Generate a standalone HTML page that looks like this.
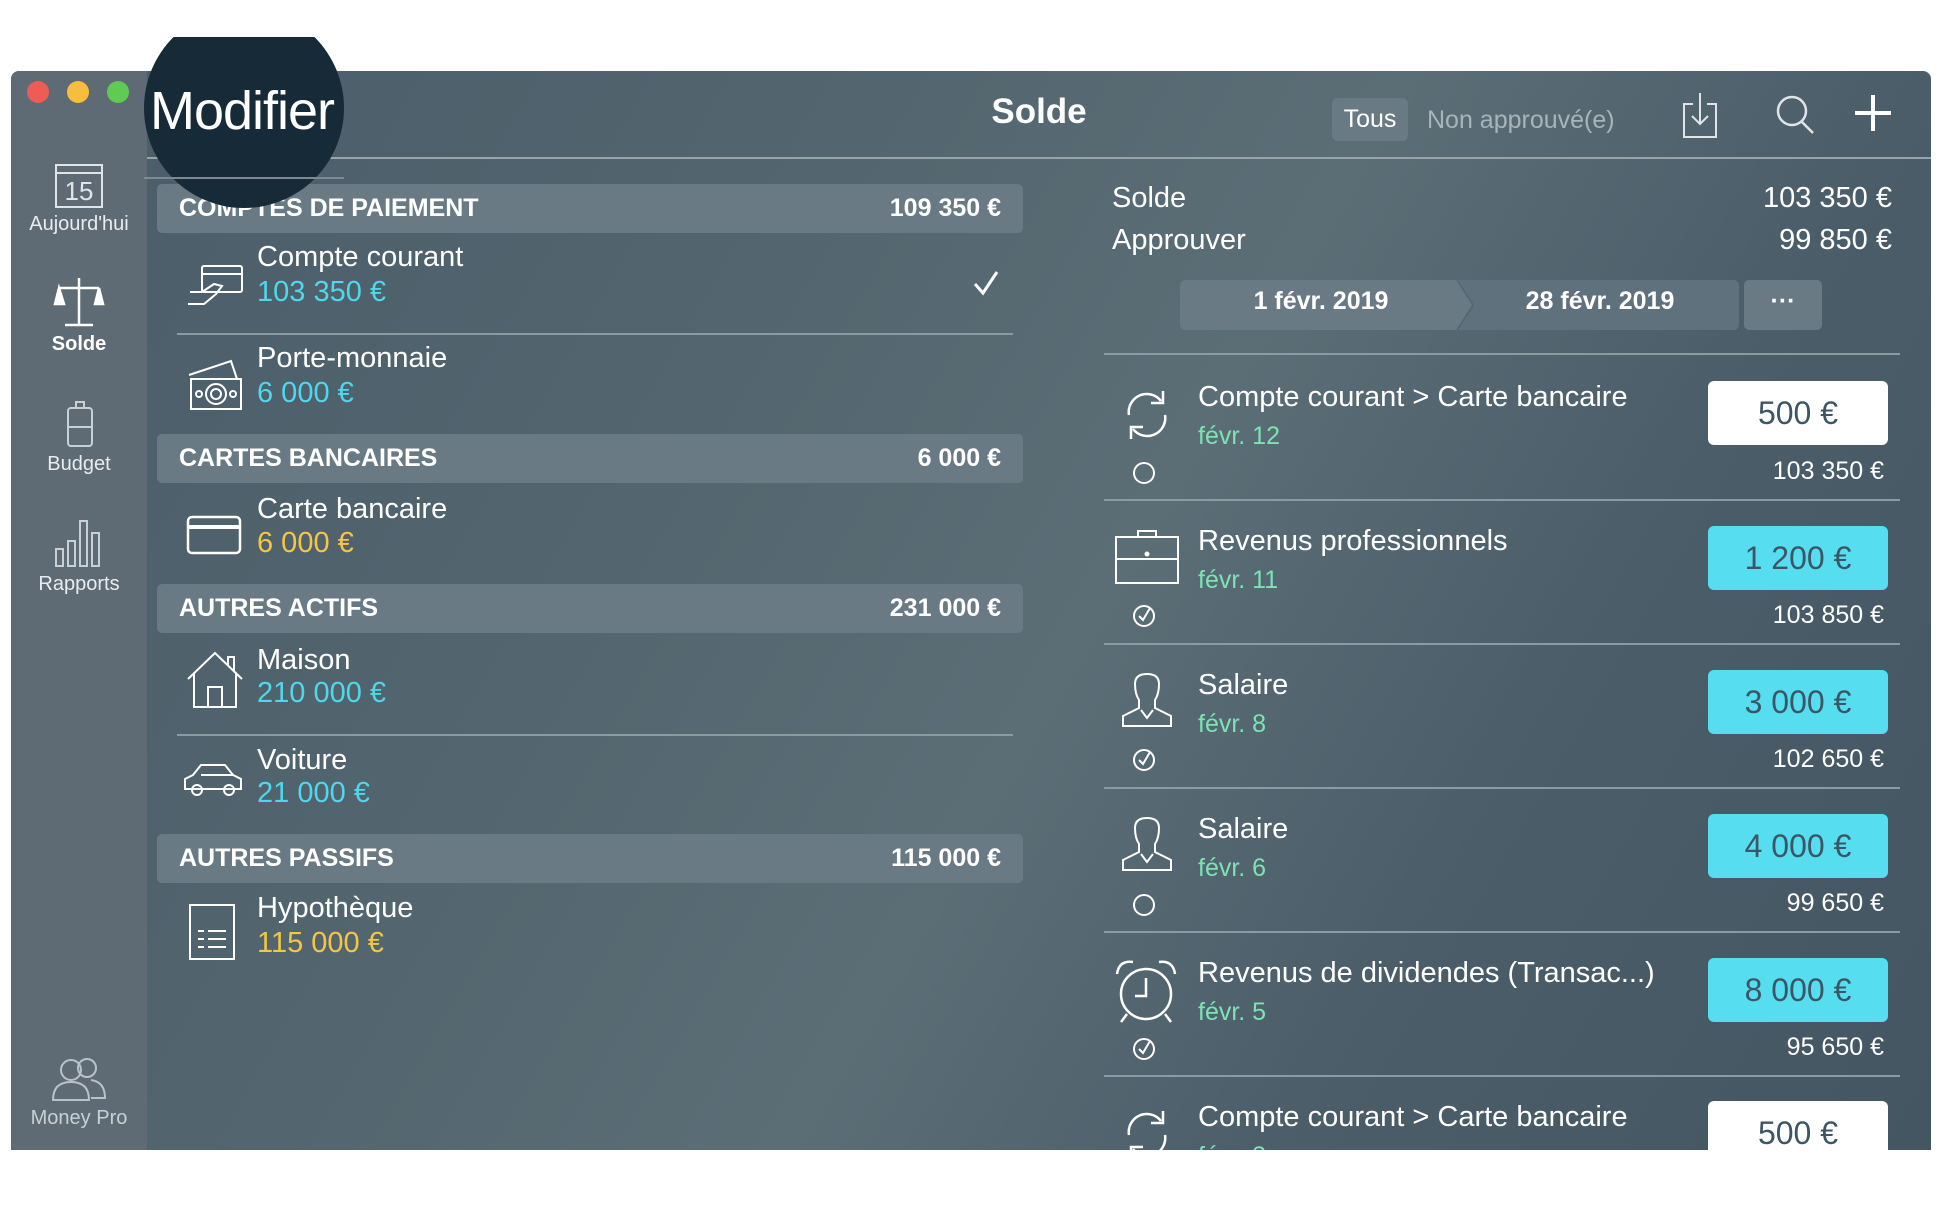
<!DOCTYPE html>
<html><head><meta charset="utf-8"><style>
*{margin:0;padding:0;box-sizing:border-box}
body{width:1940px;height:1220px;background:#fff;position:relative;overflow:hidden;font-family:"Liberation Sans",sans-serif;color:#fff}
.win{position:absolute;left:11px;top:71px;width:1920px;height:1079px;border-radius:8px 8px 0 0;overflow:hidden;
background:linear-gradient(120deg,#4a5c69 0%,#53666f 35%,#5b6e76 55%,#4b5d69 75%,#445662 100%)}
.side{position:absolute;left:0;top:0;width:136px;height:100%;background:#5e6b74}
.a{position:absolute}
.tl{position:absolute;top:10px;width:22px;height:22px;border-radius:50%}
.slab{position:absolute;width:136px;text-align:center;font-size:20px;color:#e8ecef}
.hdr{position:absolute;left:146px;width:866px;height:49px;background:#6a7a84;border-radius:5px;font-size:25px;font-weight:bold;line-height:49px;padding:0 22px 0 22px}
.hdr span{float:right}
.nm{position:absolute;left:246px;font-size:29px}
.am{position:absolute;left:246px;font-size:29px}
.cy{color:#4fd7ec}.ye{color:#f6c640}
.sep{position:absolute;height:2px;background:#8e9aa2}
.tt{position:absolute;left:1187px;font-size:29px}
.td{position:absolute;left:1187px;font-size:25px;color:#7de3b3}
.box{position:absolute;left:1697px;width:180px;height:64px;border-radius:6px;font-size:32px;color:#3d5666;text-align:center;line-height:64px;background:#56ddf0}
.box.w{background:#fff}
.bal{position:absolute;right:47px;font-size:25px;text-align:right}
svg{position:absolute;overflow:visible}
</style></head><body>
<div class="win">
 <div class="side"></div>
 <div class="tl" style="left:16px;background:#ee5c55"></div>
 <div class="tl" style="left:56px;background:#f6be3c"></div>
 <div class="tl" style="left:96px;background:#5fcb52"></div>
 <svg style="left:44px;top:93px" width="48" height="46" fill="none" stroke="#dfe4e8" stroke-width="2"><rect x="1" y="1" width="46" height="42"/><line x1="1" y1="9" x2="47" y2="9"/><text x="24" y="36" fill="#dfe4e8" stroke="none" font-size="26" text-anchor="middle" font-family="Liberation Sans">15</text></svg>
 <div class="slab" style="top:142px">Aujourd'hui</div>
 <svg style="left:44px;top:205px" width="48" height="52" fill="none" stroke="#fff" stroke-width="2.5"><line x1="24" y1="2" x2="24" y2="48"/><line x1="10" y1="49" x2="38" y2="49"/><line x1="4" y1="12" x2="44" y2="12"/><path d="M4 12 L0 28 H9 Z M44 12 L40 28 H48 Z" fill="#fff"/></svg>
 <div class="slab" style="top:262px;font-weight:bold;color:#fff">Solde</div>
 <svg style="left:56px;top:330px" width="26" height="46" fill="none" stroke="#c9d0d5" stroke-width="2"><rect x="9" y="1" width="8" height="6"/><rect x="1" y="7" width="24" height="38" rx="3"/><line x1="1" y1="26" x2="25" y2="26"/></svg>
 <div class="slab" style="top:382px">Budget</div>
 <svg style="left:44px;top:448px" width="48" height="48" fill="none" stroke="#c9d0d5" stroke-width="2"><rect x="1" y="30" width="7" height="17"/><rect x="13" y="22" width="7" height="25"/><rect x="25" y="2" width="7" height="45"/><rect x="37" y="14" width="7" height="33"/></svg>
 <div class="slab" style="top:502px">Rapports</div>
 <svg style="left:40px;top:985px" width="56" height="46" fill="none" stroke="#b9c2c8" stroke-width="2"><circle cx="20" cy="14" r="10"/><path d="M2 44 Q2 26 20 26 Q38 26 38 44 Z"/><circle cx="36" cy="12" r="9"/><path d="M40 24 Q54 26 54 42 H40"/></svg>
 <div class="slab" style="top:1036px;color:#c9d0d5">Money Pro</div>
 <div class="sep" style="left:136px;top:86px;width:1784px;height:2px;background:#98a3aa"></div>
 <div class="a" style="left:0;width:2056px;text-align:center;top:21px;font-size:35px;font-weight:bold">Solde</div>
 <div class="a" style="left:1321px;top:27px;width:76px;height:43px;border-radius:6px;background:#6a7a84;font-size:25px;text-align:center;line-height:43px">Tous</div>
 <div class="a" style="left:1416px;top:35px;font-size:25px;color:#a9b4ba">Non approuvé(e)</div>
 <svg style="left:1672px;top:21px" width="34" height="46" fill="none" stroke="#dfe4e8" stroke-width="2"><path d="M10 12 H1 V45 H33 V12 H24"/><line x1="17" y1="1" x2="17" y2="32"/><path d="M9 24 L17 32 L25 24"/></svg>
 <svg style="left:1765px;top:24px" width="40" height="40" fill="none" stroke="#dfe4e8" stroke-width="2.5"><circle cx="16" cy="16" r="14"/><line x1="26" y1="27" x2="37" y2="38"/></svg>
 <svg style="left:1844px;top:24px" width="36" height="36" stroke="#fff" stroke-width="4"><line x1="18" y1="0" x2="18" y2="36"/><line x1="0" y1="18" x2="36" y2="18"/></svg>
 <div class="hdr" style="top:113px">COMPTES DE PAIEMENT<span>109 350 €</span></div>
 <svg style="left:175px;top:193px" width="58" height="42" fill="none" stroke="#fff" stroke-width="2"><rect x="16" y="2" width="40" height="26" rx="2"/><line x1="16" y1="10" x2="56" y2="10"/><path d="M2 40 H18 L30 30 L36 22 L28 20 L16 28 L4 28"/></svg>
 <div class="nm" style="top:170px">Compte courant</div>
 <div class="am cy" style="top:205px">103 350 €</div>
 <svg style="left:962px;top:199px" width="26" height="26" fill="none" stroke="#fff" stroke-width="3"><path d="M2 14 L10 23 L24 2"/></svg>
 <div class="sep" style="left:166px;top:262px;width:836px"></div>
 <svg style="left:176px;top:288px" width="56" height="52" fill="none" stroke="#fff" stroke-width="2"><path d="M2 16 L44 2 L50 20"/><rect x="4" y="20" width="50" height="30"/><circle cx="29" cy="35" r="10"/><circle cx="29" cy="35" r="5"/><circle cx="12" cy="35" r="3"/><circle cx="46" cy="35" r="3"/></svg>
 <div class="nm" style="top:271px">Porte-monnaie</div>
 <div class="am cy" style="top:306px">6 000 €</div>
 <div class="hdr" style="top:363px">CARTES BANCAIRES<span>6 000 €</span></div>
 <svg style="left:176px;top:444px" width="54" height="40" fill="none" stroke="#fff" stroke-width="2.5"><rect x="1" y="2" width="52" height="36" rx="4"/><line x1="1" y1="12" x2="53" y2="12" stroke-width="4"/></svg>
 <div class="nm" style="top:422px">Carte bancaire</div>
 <div class="am ye" style="top:456px">6 000 €</div>
 <div class="hdr" style="top:513px">AUTRES ACTIFS<span>231 000 €</span></div>
 <svg style="left:175px;top:580px" width="58" height="58" fill="none" stroke="#fff" stroke-width="2"><path d="M2 28 L29 2 L56 28"/><path d="M8 22 V56 H50 V22"/><path d="M22 56 V36 H36 V56"/><path d="M42 14 V6 H48 V20"/></svg>
 <div class="nm" style="top:573px">Maison</div>
 <div class="am cy" style="top:606px">210 000 €</div>
 <div class="sep" style="left:166px;top:663px;width:836px"></div>
 <svg style="left:172px;top:692px" width="60" height="34" fill="none" stroke="#fff" stroke-width="2"><path d="M2 22 V16 L10 12 L18 2 H42 L50 12 L58 16 V26 H2 Z"/><line x1="18" y1="12" x2="50" y2="12"/><circle cx="14" cy="27" r="5"/><circle cx="46" cy="27" r="5"/></svg>
 <div class="nm" style="top:673px">Voiture</div>
 <div class="am cy" style="top:706px">21 000 €</div>
 <div class="hdr" style="top:763px">AUTRES PASSIFS<span>115 000 €</span></div>
 <svg style="left:177px;top:832px" width="48" height="58" fill="none" stroke="#fff" stroke-width="2"><path d="M2 2 H46 V56 H2 Z"/><line x1="10" y1="28" x2="16" y2="28"/><line x1="20" y1="28" x2="38" y2="28"/><line x1="10" y1="36" x2="16" y2="36"/><line x1="20" y1="36" x2="38" y2="36"/><line x1="10" y1="44" x2="16" y2="44"/><line x1="20" y1="44" x2="38" y2="44"/></svg>
 <div class="nm" style="top:821px">Hypothèque</div>
 <div class="am ye" style="top:856px">115 000 €</div>
 <div class="a" style="left:1101px;top:111px;font-size:29px">Solde</div>
 <div class="a" style="right:39px;top:111px;font-size:29px">103 350 €</div>
 <div class="a" style="left:1101px;top:153px;font-size:29px">Approuver</div>
 <div class="a" style="right:39px;top:153px;font-size:29px">99 850 €</div>
 <svg style="left:1169px;top:209px" width="645" height="50"><path d="M6 0 H276 L292 25 L276 50 H6 Q0 50 0 44 V6 Q0 0 6 0Z" fill="#6a7a84"/><path d="M278 0 H553 Q559 0 559 6 V44 Q559 50 553 50 H278 L294 25 Z" fill="#5f717c"/><rect x="564" y="0" width="78" height="50" rx="5" fill="#6a7a84"/></svg>
 <div class="a" style="left:1169px;width:282px;top:216px;text-align:center;font-size:25px;font-weight:bold">1 févr. 2019</div>
 <div class="a" style="left:1449px;width:280px;top:216px;text-align:center;font-size:25px;font-weight:bold">28 févr. 2019</div>
 <div class="a" style="left:1733px;width:78px;top:216px;text-align:center;font-size:25px;font-weight:bold">···</div>
 <div class="sep" style="left:1093px;top:282px;width:796px"></div>
 <svg style="left:1112px;top:318px" width="48" height="52" fill="none" stroke="#fff" stroke-width="2.5"><path d="M6 26 A18 18 0 0 1 38 12"/><path d="M40 2 V14 H28"/><path d="M42 26 A18 18 0 0 1 10 40"/><path d="M8 50 V38 H20"/></svg>
 <svg style="left:1121px;top:390px" width="24" height="24" fill="none" stroke="#fff" stroke-width="2"><circle cx="12" cy="12" r="10"/></svg>
 <div class="tt" style="top:310px">Compte courant &gt; Carte bancaire</div>
 <div class="td" style="top:351px">févr. 12</div>
 <div class="box w" style="top:310px">500 €</div>
 <div class="bal" style="top:386px">103 350 €</div>
 <div class="sep" style="left:1093px;top:428px;width:796px"></div>
 <svg style="left:1103px;top:458px" width="66" height="56" fill="none" stroke="#fff" stroke-width="2"><path d="M24 8 V2 H42 V8"/><rect x="2" y="8" width="62" height="46"/><line x1="2" y1="30" x2="64" y2="30"/><circle cx="33" cy="25" r="1.5" fill="#fff"/></svg>
 <svg style="left:1121px;top:533px" width="24" height="24" fill="none" stroke="#fff" stroke-width="2"><circle cx="12" cy="12" r="10"/><path d="M7 12 L11 16 L18 4"/></svg>
 <div class="tt" style="top:454px">Revenus professionnels</div>
 <div class="td" style="top:495px">févr. 11</div>
 <div class="box" style="top:455px">1 200 €</div>
 <div class="bal" style="top:530px">103 850 €</div>
 <div class="sep" style="left:1093px;top:572px;width:796px"></div>
 <svg style="left:1108px;top:601px" width="56" height="56" fill="none" stroke="#fff" stroke-width="2"><path d="M20 28 Q16 22 16 12 Q16 2 28 2 Q40 2 40 12 Q40 22 36 28 V36 L52 44 V54 H4 V44 L20 36 Z"/><path d="M22 38 L28 46 L34 38"/></svg>
 <svg style="left:1121px;top:677px" width="24" height="24" fill="none" stroke="#fff" stroke-width="2"><circle cx="12" cy="12" r="10"/><path d="M7 12 L11 16 L18 4"/></svg>
 <div class="tt" style="top:598px">Salaire</div>
 <div class="td" style="top:639px">févr. 8</div>
 <div class="box" style="top:599px">3 000 €</div>
 <div class="bal" style="top:674px">102 650 €</div>
 <div class="sep" style="left:1093px;top:716px;width:796px"></div>
 <svg style="left:1108px;top:745px" width="56" height="56" fill="none" stroke="#fff" stroke-width="2"><path d="M20 28 Q16 22 16 12 Q16 2 28 2 Q40 2 40 12 Q40 22 36 28 V36 L52 44 V54 H4 V44 L20 36 Z"/><path d="M22 38 L28 46 L34 38"/></svg>
 <svg style="left:1121px;top:822px" width="24" height="24" fill="none" stroke="#fff" stroke-width="2"><circle cx="12" cy="12" r="10"/></svg>
 <div class="tt" style="top:742px">Salaire</div>
 <div class="td" style="top:783px">févr. 6</div>
 <div class="box" style="top:743px">4 000 €</div>
 <div class="bal" style="top:818px">99 650 €</div>
 <div class="sep" style="left:1093px;top:860px;width:796px"></div>
 <svg style="left:1102px;top:887px" width="66" height="66" fill="none" stroke="#fff" stroke-width="2.5"><circle cx="33" cy="36" r="25"/><path d="M33 20 V38 H22"/><path d="M4 16 Q6 2 20 4"/><path d="M62 16 Q60 2 46 4"/><line x1="14" y1="56" x2="8" y2="64"/><line x1="52" y1="56" x2="58" y2="64"/></svg>
 <svg style="left:1121px;top:966px" width="24" height="24" fill="none" stroke="#fff" stroke-width="2"><circle cx="12" cy="12" r="10"/><path d="M7 12 L11 16 L18 4"/></svg>
 <div class="tt" style="top:886px">Revenus de dividendes (Transac...)</div>
 <div class="td" style="top:927px">févr. 5</div>
 <div class="box" style="top:887px">8 000 €</div>
 <div class="bal" style="top:962px">95 650 €</div>
 <div class="sep" style="left:1093px;top:1004px;width:796px"></div>
 <svg style="left:1112px;top:1038px" width="48" height="52" fill="none" stroke="#fff" stroke-width="2.5"><path d="M6 26 A18 18 0 0 1 38 12"/><path d="M40 2 V14 H28"/><path d="M42 26 A18 18 0 0 1 10 40"/><path d="M8 50 V38 H20"/></svg>
 <div class="tt" style="top:1030px">Compte courant &gt; Carte bancaire</div>
 <div class="td" style="top:1071px">févr. 3</div>
 <div class="box w" style="top:1030px">500 €</div>
</div>
<div style="position:absolute;left:144px;top:37px;width:200px;height:172px;overflow:hidden">
 <div style="position:absolute;left:0;top:-29px;width:200px;height:200px;border-radius:50%;background:#172a38"></div>
 <div style="position:absolute;left:0;top:140px;width:200px;height:2px;background:#7d8a93"></div>
</div>
<div style="position:absolute;left:142px;width:200px;top:80px;text-align:center;font-size:54px;color:#fff;letter-spacing:-1px">Modifier</div>
</body></html>
